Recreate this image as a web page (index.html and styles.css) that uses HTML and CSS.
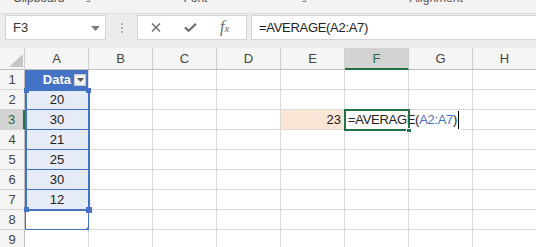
FILE: index.html
```html
<!DOCTYPE html>
<html>
<head>
<meta charset="utf-8">
<link rel="stylesheet" href="styles.css">
</head>
<body>
<div class="ribbon">
  <div class="labels">
    <span class="lbl clip">Clipboard</span>
    <span class="launch l1"></span>
    <span class="lbl font">Font</span>
    <span class="launch l2"></span>
    <span class="lbl align">Alignment</span>
  </div>
</div>
<div class="fbar">
  <div class="namebox">
    <span class="ref">F3</span>
    <svg class="dd" width="9" height="5" viewBox="0 0 9 5"><path d="M0 0h9L4.5 5z" fill="#7a7a7a"/></svg>
  </div>
  <div class="grip"><i></i><i></i><i></i></div>
  <div class="btns">
    <svg class="ico x1" width="10" height="9" viewBox="0 0 10 9"><path d="M1 0.5L9 8.5M9 0.5L1 8.5" stroke="#707070" stroke-width="1.5" fill="none"/></svg>
    <svg class="ico ck" width="13" height="9" viewBox="0 0 13 9"><path d="M1 4.4L4.6 7.8L12 0.8" stroke="#707070" stroke-width="2.2" fill="none"/></svg>
    <span class="fx"><i>f</i><i class="x">x</i></span>
  </div>
  <div class="input">=AVERAGE(A2:A7)</div>
</div>
<div class="sheet">
  <div class="grid">
    <div class="ch corner"><svg width="14" height="13" viewBox="0 0 14 13"><path d="M14 0V13H0z" fill="#c4c4c4"/></svg></div>
    <div class="ch">A</div><div class="ch">B</div><div class="ch">C</div><div class="ch">D</div><div class="ch">E</div><div class="ch sel">F</div><div class="ch">G</div><div class="ch">H</div>

    <div class="rh">1</div>
    <div class="c thead"><span class="th">Data</span><span class="filter"><svg width="7" height="4" viewBox="0 0 7 4"><path d="M0 0h7L3.5 4z" fill="#555"/></svg></span></div>
    <div class="c"></div><div class="c"></div><div class="c"></div><div class="c"></div><div class="c"></div><div class="c"></div><div class="c"></div>

    <div class="rh">2</div>
    <div class="c td">20</div>
    <div class="c"></div><div class="c"></div><div class="c"></div><div class="c"></div><div class="c"></div><div class="c"></div><div class="c"></div>

    <div class="rh rsel">3</div>
    <div class="c td">30</div>
    <div class="c"></div><div class="c"></div><div class="c"></div>
    <div class="c peach">23</div>
    <div class="c active"><span class="ftext">=AVERAGE(<span class="refc">A2:A7</span>)<span class="caret"></span></span></div>
    <div class="c"></div><div class="c"></div>

    <div class="rh">4</div>
    <div class="c td">21</div>
    <div class="c"></div><div class="c"></div><div class="c"></div><div class="c"></div><div class="c"></div><div class="c"></div><div class="c"></div>

    <div class="rh">5</div>
    <div class="c td">25</div>
    <div class="c"></div><div class="c"></div><div class="c"></div><div class="c"></div><div class="c"></div><div class="c"></div><div class="c"></div>

    <div class="rh">6</div>
    <div class="c td">30</div>
    <div class="c"></div><div class="c"></div><div class="c"></div><div class="c"></div><div class="c"></div><div class="c"></div><div class="c"></div>

    <div class="rh">7</div>
    <div class="c td">12</div>
    <div class="c"></div><div class="c"></div><div class="c"></div><div class="c"></div><div class="c"></div><div class="c"></div><div class="c"></div>

    <div class="rh">8</div>
    <div class="c tlast"></div>
    <div class="c"></div><div class="c"></div><div class="c"></div><div class="c"></div><div class="c"></div><div class="c"></div><div class="c"></div>

    <div class="rh">9</div>
    <div class="c"></div>
    <div class="c"></div><div class="c"></div><div class="c"></div><div class="c"></div><div class="c"></div><div class="c"></div><div class="c"></div>
  </div>

  <div class="range">
    <span class="h tl"></span><span class="h tr"></span><span class="h bl"></span><span class="h br"></span>
  </div>
  <div class="resize"></div>
  <div class="activebox"><span class="fill"></span></div>
</div>
</body>
</html>
```

FILE: styles.css
```css
* { box-sizing: border-box; }
html, body { margin: 0; padding: 0; }
body {
  width: 536px;
  height: 247px;
  overflow: hidden;
  background: #ffffff;
  font-family: "Liberation Sans", Arial, sans-serif;
  color: #222;
}

/* ribbon remnant */
.ribbon {
  height: 14px;
  background: #f3f3f3;
  border-bottom: 1px solid #dcdcdc;
  overflow: hidden;
}
.labels {
  display: flex;
  align-items: flex-start;
  margin-top: -8px;
  height: 12px;
  font-size: 12px;
  line-height: 12px;
  color: #555;
}
.clip { margin-left: 13px; }
.launch {
  width: 4px;
  height: 10px;
  border-right: 1px solid #888;
  border-bottom: 1px solid #888;
}
.l1 { margin-left: 22px; }
.font { margin-left: 93px; }
.l2 { margin-left: 95px; }
.align { margin-left: 103px; }

/* formula bar */
.fbar {
  height: 34px;
  background: #ececec;
  display: flex;
  align-items: flex-start;
  padding-top: 1px;
  padding-left: 5px;
}
.namebox {
  width: 101px;
  height: 25px;
  background: #fff;
  border: 1px solid #d4d4d4;
  display: flex;
  align-items: center;
  justify-content: space-between;
  padding: 0 5px 0 7px;
}
.ref { font-size: 13px; color: #333; }
.dd { margin-top: 1px; }
.grip {
  width: 31px;
  height: 25px;
  display: flex;
  flex-direction: column;
  align-items: center;
  justify-content: center;
  gap: 2px;
}
.grip i {
  display: block;
  width: 2px;
  height: 2px;
  background: #b0b0b0;
}
.btns {
  width: 110px;
  height: 25px;
  background: #fff;
  border: 1px solid #d4d4d4;
  display: flex;
  align-items: center;
  padding-left: 13px;
}
.ico { display: block; }
.ck { margin-left: 23px; }
.fx {
  font-family: "Liberation Serif", "Times New Roman", serif;
  font-size: 16px;
  line-height: 16px;
  color: #6a6a6a;
  margin-left: 23px;
}
.fx .x { font-size: 11px; }
.input {
  flex: 1;
  height: 25px;
  margin-left: 4px;
  background: #fff;
  border: 1px solid #d4d4d4;
  border-right: 0;
  font-size: 13px;
  letter-spacing: -0.3px;
  line-height: 23px;
  padding-left: 7px;
  color: #222;
}

/* sheet */
.sheet { position: relative; }
.grid {
  display: grid;
  grid-template-columns: 25px repeat(8, 64px);
  grid-template-rows: 22px repeat(9, 20px);
  font-size: 13px;
}
.ch {
  background: #f5f5f5;
  border-right: 1px solid #cfcfcf;
  border-bottom: 1px solid #bdbdbd;
  color: #444;
  text-align: center;
  line-height: 21px;
}
.ch.sel {
  background: #d3d3d3;
  color: #2f6a45;
  border-bottom: 2px solid #217346;
}
.corner {
  display: flex;
  align-items: flex-end;
  justify-content: flex-end;
  padding: 0 1px 2px 0;
}
.corner svg { display: block; }
.rh {
  background: #f5f5f5;
  border-right: 1px solid #bdbdbd;
  border-bottom: 1px solid #d4d4d4;
  color: #444;
  text-align: center;
  line-height: 20px;
}
.rh.rsel {
  background: #d3d3d3;
  color: #2f6a45;
  border-right: 2px solid #217346;
}
.c {
  border-right: 1px solid #d9d9d9;
  border-bottom: 1px solid #d9d9d9;
  line-height: 20px;
  white-space: nowrap;
}
.thead {
  background: #4472c4;
  border-bottom-color: #4472c4;
  display: flex;
  align-items: center;
  justify-content: flex-end;
  padding-right: 2px;
}
.th {
  color: #fff;
  font-weight: bold;
  margin-right: 3px;
}
.filter {
  width: 12px;
  height: 12px;
  background: #f0f0f0;
  border: 1px solid #c9c9c9;
  display: flex;
  align-items: center;
  justify-content: center;
}
.filter svg { display: block; }
.td {
  background: #e6ecf7;
  border-left: 1px solid #4472c4;
  border-right: 1px solid #4472c4;
  border-bottom: 1px solid #4472c4;
  text-align: center;
  color: #222;
}
.tlast {
  border-left: 1px solid #4472c4;
  border-right: 1px solid #4472c4;
  border-bottom: 1px solid #4472c4;
}
.peach {
  background: #fce4d6;
  text-align: right;
  padding-right: 3px;
}
.active { padding-left: 3px; }
.ftext {
  position: relative;
  z-index: 1;
  display: inline-block;
  background: #fff;
  letter-spacing: -0.3px;
  color: #222;
  padding-right: 3px;
}
.refc { color: #4472c4; }
.caret {
  position: absolute;
  right: 1px;
  top: 1px;
  width: 1px;
  height: 18px;
  background: #000;
}

/* overlays */
.range {
  position: absolute;
  left: 25px;
  top: 41px;
  width: 65px;
  height: 122px;
  border: 2px solid #4472c4;
}
.h {
  position: absolute;
  width: 5px;
  height: 5px;
  background: #4472c4;
}
.h.tl { left: -3px; top: -3px; }
.h.tr { right: -3px; top: -3px; }
.h.bl { left: -3px; bottom: -3px; }
.h.br { right: -4px; bottom: -4px; width: 6px; height: 6px; }
.resize {
  position: absolute;
  left: 85px;
  top: 178px;
  width: 0;
  height: 0;
  border-left: 4px solid transparent;
  border-bottom: 4px solid #4472c4;
}
.activebox {
  position: absolute;
  left: 344px;
  top: 61px;
  width: 66px;
  height: 22px;
  border: 2px solid #217346;
  z-index: 2;
}
.fill {
  position: absolute;
  right: -4px;
  bottom: -4px;
  width: 6px;
  height: 5px;
  background: #217346;
  border: 1px solid #fff;
}
```
